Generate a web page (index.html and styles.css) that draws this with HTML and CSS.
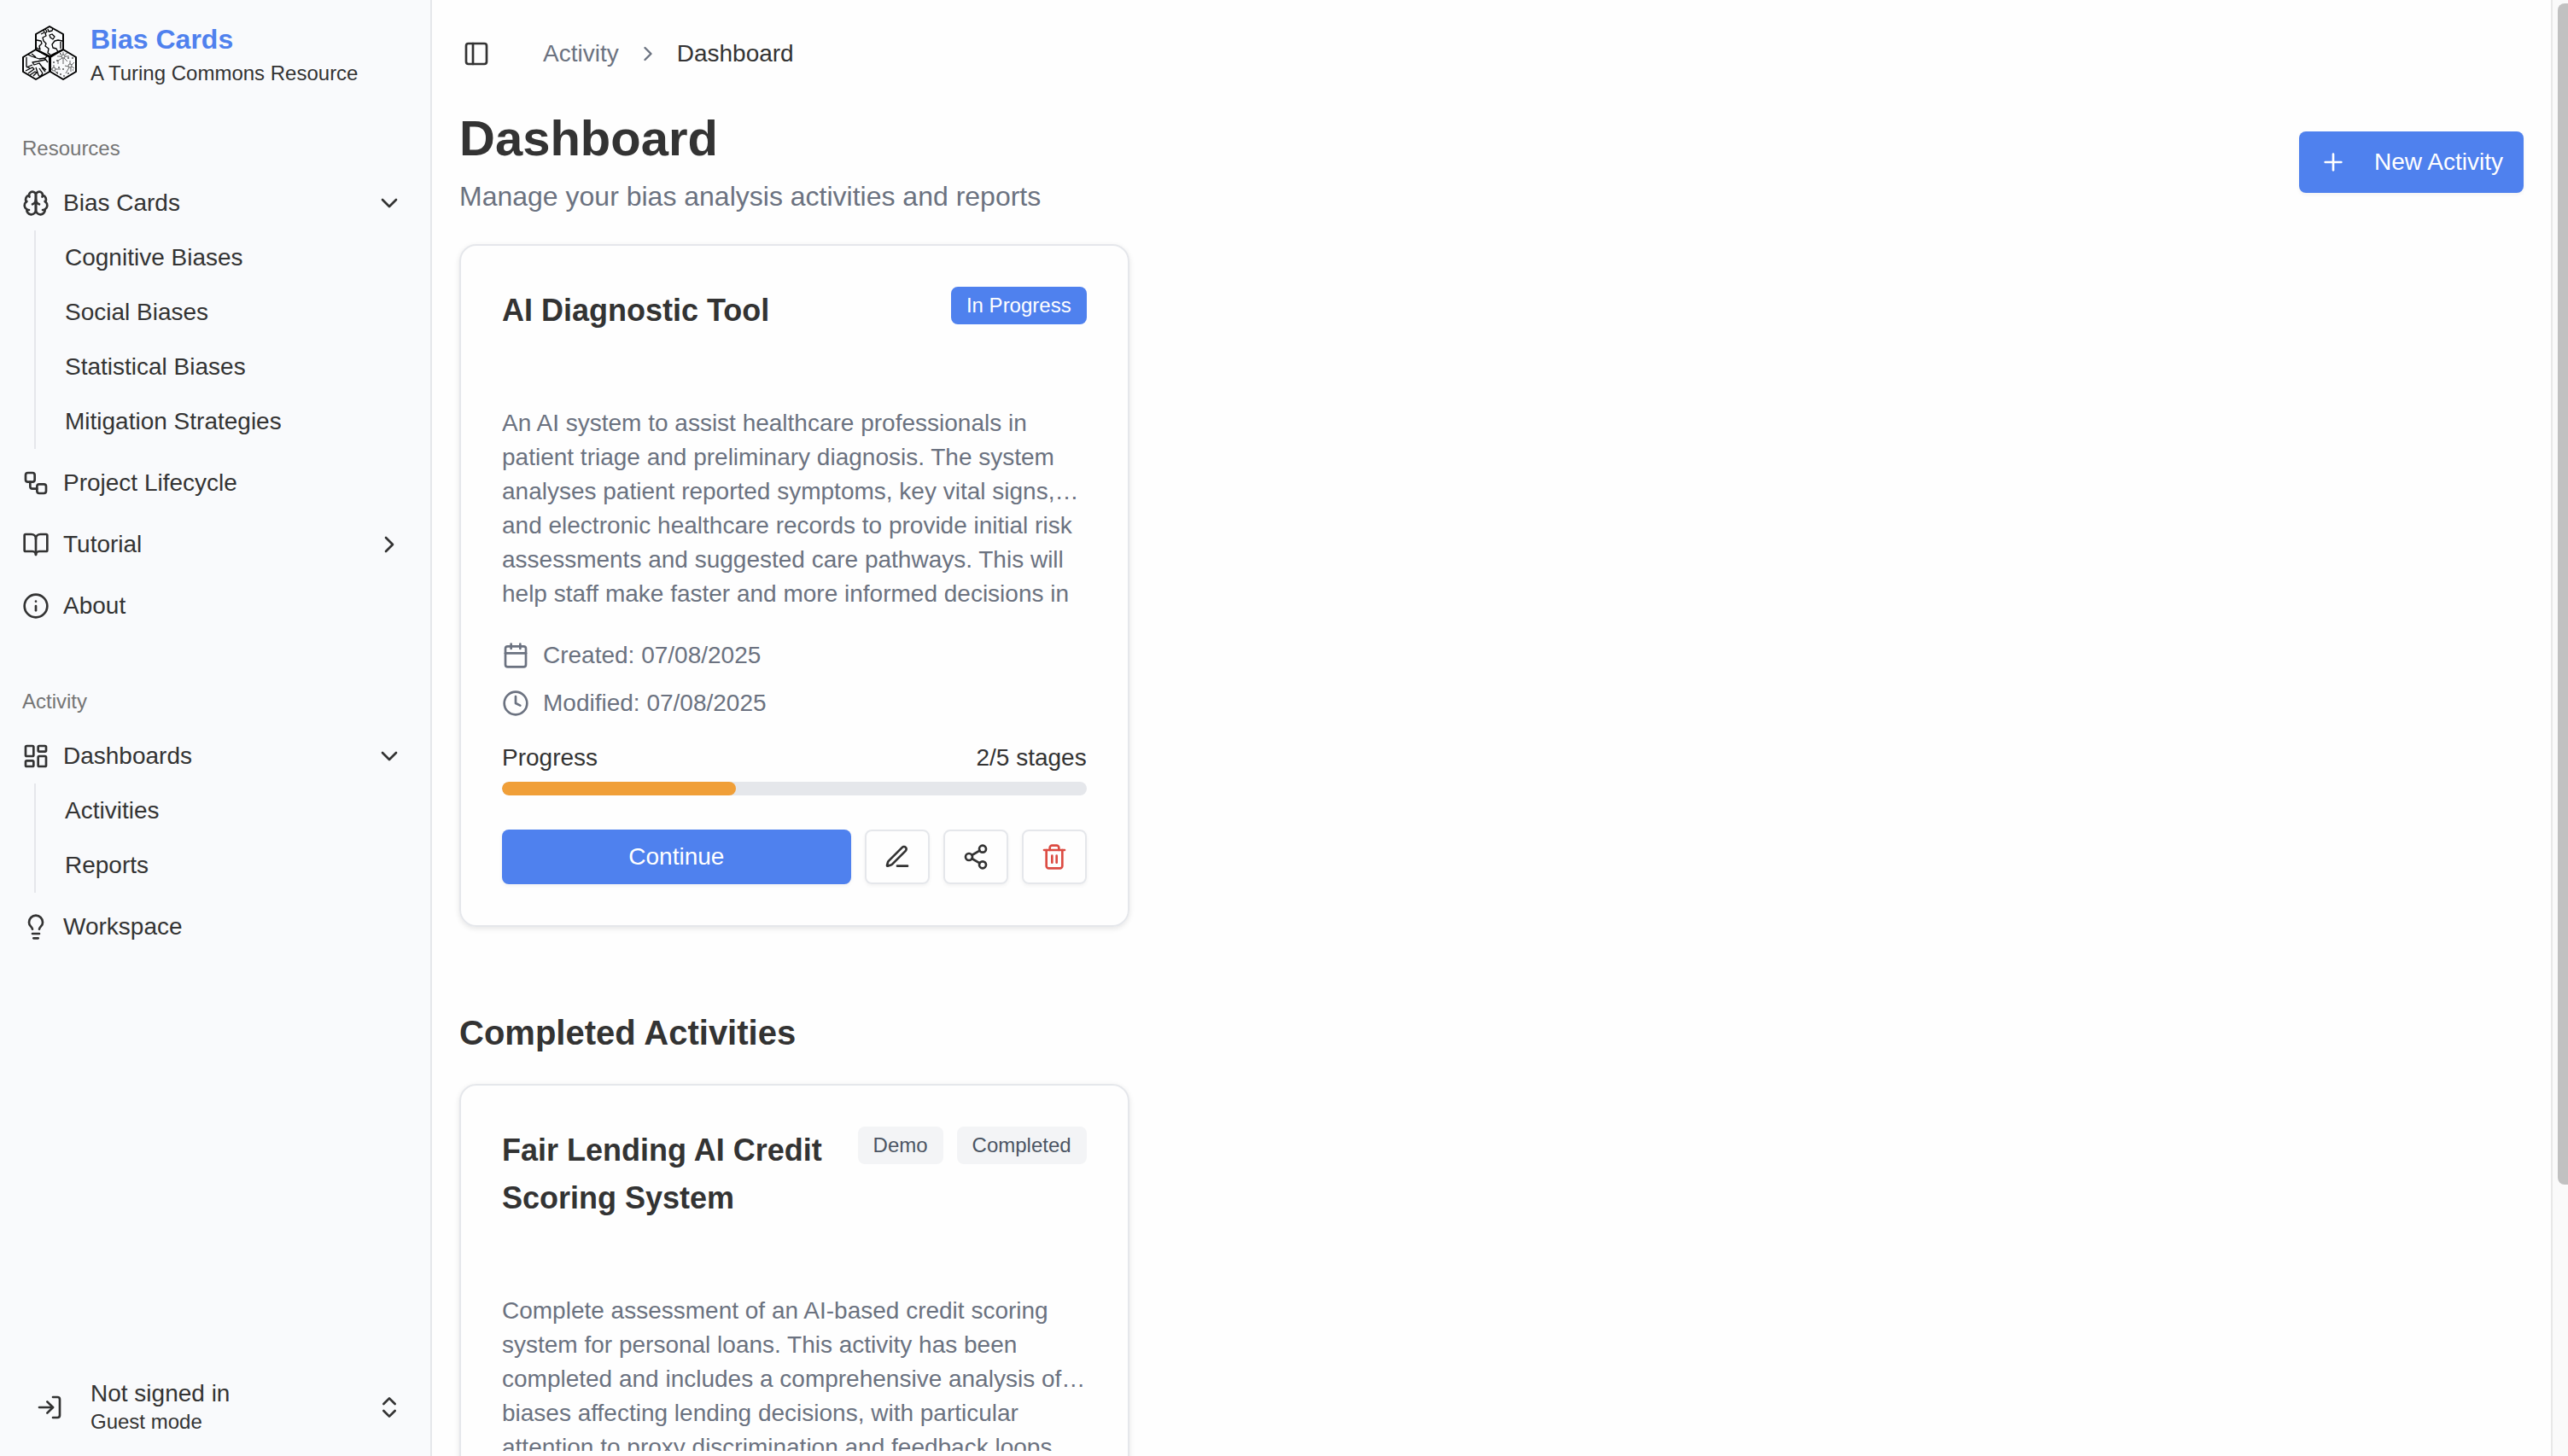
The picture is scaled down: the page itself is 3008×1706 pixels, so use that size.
FILE: index.html
```html
<!DOCTYPE html>
<html lang="en">
<head>
<meta charset="utf-8">
<title>Dashboard - Bias Cards</title>
<link rel="stylesheet" href="styles.css">
</head>
<body>
<div class="app">
  <aside class="sidebar">
    <header class="brand">
      <svg class="brand-logo" viewBox="0 0 64 64" aria-hidden="true">
        <g class="logo-frame">
          <path d="M32 1 48 10V28L32 36 16 28V10Z"/>
          <path d="M16 28 32 37V54L16 63 1 54V37Z"/>
          <path d="M48 28 63 37V54L48 63 33 54V37Z"/>
        </g>
        <g class="logo-art">
          <path d="M27 4 29 7 27 9 28 12 24 14 25 18 28 21 27 24 31 27 30 32 33 34M25 5 26 8 22 10M36 3 35 6 31 7 30 4M32 11 35 10 38 13 36 16 33 14ZM17 17 22 18 23 21 20 24 21 28 17 26M47 18 42 17 38 18 35 22 36 26 40 27 42 31M45 19V27"/>
          <path d="M7 34 11 36 20 39 27 38 29 36M11 33 16 37M5 37V48L9 50M27 40 18 42 12 43 14 46 20 44 23 48 28 52M26 38 30 43M5 49 12 46M4 53 12 49 14 51 7 56M9 58 15 54 17 55 13 59M16 49 19 58M20 50 24 56M23 49 27 54M19 58 21 60 24 56"/>
          <g class="logo-net">
            <circle cx="48" cy="36" r="2"/><circle cx="37" cy="51" r="2"/><circle cx="56" cy="47" r="2"/>
            <path d="M48 34V31M50 36H55M46 36H41M49 38 53 42M47 38 42 41V45M48 38V45M46 34 44 32M50 34 53 32M39 51H45M38 53 42 57M37 49V46M35 51H34M56 45V41M58 46 61 43M54 48 50 47M55 49 51 56M57 49V54M58 48 61 50"/>
            <path class="logo-dots" d="M40 41H42M44 33H45M53 38H55M36 43H38M58 38H60M42 49H44M47 51H49M53 56H55M44 57H46M48 59H50M40 55H42M59 52H60"/>
          </g>
        </g>
      </svg>
      <div class="brand-text">
        <a class="brand-name" href="#">Bias Cards</a>
        <span class="brand-tagline">A Turing Commons Resource</span>
      </div>
    </header>

    <nav class="nav" aria-label="Main">
      <section class="nav-group">
        <h2 class="nav-label">Resources</h2>
        <div class="nav-section">
          <button class="nav-item" type="button" aria-expanded="true">
            <svg class="icon" viewBox="0 0 24 24"><path d="M12 5a3 3 0 1 0-5.997.125 4 4 0 0 0-2.526 5.77 4 4 0 0 0 .556 6.588A4 4 0 1 0 12 18Z"/><path d="M12 5a3 3 0 1 1 5.997.125 4 4 0 0 1 2.526 5.77 4 4 0 0 1-.556 6.588A4 4 0 1 1 12 18Z"/><path d="M15 13a4.500 4.500 0 0 1-3-4 4.500 4.500 0 0 1-3 4"/><path d="M17.599 6.500a3 3 0 0 0 .399-1.375"/><path d="M6.003 5.125A3 3 0 0 0 6.401 6.500"/><path d="M3.477 10.896a4 4 0 0 1 .585-.396"/><path d="M19.938 10.500a4 4 0 0 1 .585.396"/><path d="M6 18a4 4 0 0 1-1.967-.516"/><path d="M19.967 17.484A4 4 0 0 1 18 18"/></svg>
            <span class="nav-text">Bias Cards</span>
            <svg class="icon" viewBox="0 0 24 24"><path d="m6 9 6 6 6-6"/></svg>
          </button>
          <div class="nav-sub">
            <a class="nav-subitem" href="#">Cognitive Biases</a>
            <a class="nav-subitem" href="#">Social Biases</a>
            <a class="nav-subitem" href="#">Statistical Biases</a>
            <a class="nav-subitem" href="#">Mitigation Strategies</a>
          </div>
        </div>
        <a class="nav-item" href="#">
          <svg class="icon" viewBox="0 0 24 24"><rect width="8" height="8" x="3" y="3" rx="2"/><path d="M7 11v4a2 2 0 0 0 2 2h4"/><rect width="8" height="8" x="13" y="13" rx="2"/></svg>
          <span class="nav-text">Project Lifecycle</span>
        </a>
        <button class="nav-item" type="button" aria-expanded="false">
          <svg class="icon" viewBox="0 0 24 24"><path d="M12 7v14"/><path d="M3 18a1 1 0 0 1-1-1V4a1 1 0 0 1 1-1h5a4 4 0 0 1 4 4 4 4 0 0 1 4-4h5a1 1 0 0 1 1 1v13a1 1 0 0 1-1 1h-6a3 3 0 0 0-3 3 3 3 0 0 0-3-3z"/></svg>
          <span class="nav-text">Tutorial</span>
          <svg class="icon" viewBox="0 0 24 24"><path d="m9 18 6-6-6-6"/></svg>
        </button>
        <a class="nav-item" href="#">
          <svg class="icon" viewBox="0 0 24 24"><circle cx="12" cy="12" r="10"/><path d="M12 16v-4"/><path d="M12 8h.01"/></svg>
          <span class="nav-text">About</span>
        </a>
      </section>

      <section class="nav-group">
        <h2 class="nav-label">Activity</h2>
        <div class="nav-section">
          <button class="nav-item" type="button" aria-expanded="true">
            <svg class="icon" viewBox="0 0 24 24"><rect width="7" height="9" x="3" y="3" rx="1"/><rect width="7" height="5" x="14" y="3" rx="1"/><rect width="7" height="9" x="14" y="12" rx="1"/><rect width="7" height="5" x="3" y="16" rx="1"/></svg>
            <span class="nav-text">Dashboards</span>
            <svg class="icon" viewBox="0 0 24 24"><path d="m6 9 6 6 6-6"/></svg>
          </button>
          <div class="nav-sub">
            <a class="nav-subitem" href="#">Activities</a>
            <a class="nav-subitem" href="#">Reports</a>
          </div>
        </div>
        <a class="nav-item" href="#">
          <svg class="icon" viewBox="0 0 24 24"><path d="M15 14c.2-1 .7-1.700 1.500-2.500 1-.9 1.500-2.200 1.500-3.500A6 6 0 0 0 6 8c0 1 .2 2.200 1.500 3.500.7.7 1.300 1.500 1.500 2.500"/><path d="M9 18h6"/><path d="M10 22h4"/></svg>
          <span class="nav-text">Workspace</span>
        </a>
      </section>
    </nav>

    <button class="account" type="button">
      <span class="account-avatar"><svg class="icon" viewBox="0 0 24 24"><path d="M15 3h4a2 2 0 0 1 2 2v14a2 2 0 0 1-2 2h-4"/><path d="m10 17 5-5-5-5"/><path d="M15 12H3"/></svg></span>
      <span class="account-text">
        <span class="account-name">Not signed in</span>
        <span class="account-mode">Guest mode</span>
      </span>
      <svg class="icon" viewBox="0 0 24 24"><path d="m7 15 5 5 5-5"/><path d="m7 9 5-5 5 5"/></svg>
    </button>
  </aside>

  <main class="main">
    <div class="topbar">
      <button class="icon-button" type="button" aria-label="Toggle sidebar">
        <svg class="icon" viewBox="0 0 24 24"><rect width="18" height="18" x="3" y="3" rx="2"/><path d="M9 3v18"/></svg>
      </button>
      <nav class="breadcrumb" aria-label="Breadcrumb">
        <a class="breadcrumb-link" href="#">Activity</a>
        <svg class="icon icon-small" viewBox="0 0 24 24"><path d="m9 18 6-6-6-6"/></svg>
        <span class="breadcrumb-current" aria-current="page">Dashboard</span>
      </nav>
    </div>

    <div class="page">
      <header class="page-header">
        <div class="page-heading">
          <h1 class="page-title">Dashboard</h1>
          <p class="page-subtitle">Manage your bias analysis activities and reports</p>
        </div>
        <button class="button button-new" type="button">
          <svg class="icon" viewBox="0 0 24 24"><path d="M5 12h14"/><path d="M12 5v14"/></svg>
          New Activity
        </button>
      </header>

      <div class="card-grid">
        <article class="card">
          <div class="card-header">
            <h3 class="card-title">AI Diagnostic Tool</h3>
            <div class="badges"><span class="badge badge-primary">In Progress</span></div>
          </div>
          <p class="card-description">An AI system to assist healthcare professionals in patient triage and preliminary diagnosis. The system analyses patient reported symptoms, key vital signs, and electronic healthcare records to provide initial risk assessments and suggested care pathways. This will help staff make faster and more informed decisions in</p>
          <div class="card-dates">
            <div class="card-date"><svg class="icon" viewBox="0 0 24 24"><path d="M8 2v4"/><path d="M16 2v4"/><rect width="18" height="18" x="3" y="4" rx="2"/><path d="M3 10h18"/></svg>Created: 07/08/2025</div>
            <div class="card-date"><svg class="icon" viewBox="0 0 24 24"><circle cx="12" cy="12" r="10"/><path d="M12 6v6l4 2"/></svg>Modified: 07/08/2025</div>
          </div>
          <div class="progress">
            <div class="progress-label"><span>Progress</span><span>2/5 stages</span></div>
            <div class="progress-track"><div class="progress-fill" style="width: 40%"></div></div>
          </div>
          <div class="card-actions">
            <button class="button button-continue" type="button">Continue</button>
            <button class="button button-outline" type="button" aria-label="Edit"><svg class="icon" viewBox="0 0 24 24"><path d="M12 20h9"/><path d="M16.376 3.622a1 1 0 0 1 3.002 3.002L7.368 18.635a2 2 0 0 1-.855.506l-2.872.838a.5.5 0 0 1-.62-.62l.838-2.872a2 2 0 0 1 .506-.854z"/></svg></button>
            <button class="button button-outline" type="button" aria-label="Share"><svg class="icon" viewBox="0 0 24 24"><circle cx="18" cy="5" r="3"/><circle cx="6" cy="12" r="3"/><circle cx="18" cy="19" r="3"/><path d="m8.590 13.510 6.830 3.980"/><path d="m15.410 6.510-6.820 3.980"/></svg></button>
            <button class="button button-outline button-danger" type="button" aria-label="Delete"><svg class="icon" viewBox="0 0 24 24"><path d="M3 6h18"/><path d="M19 6v14c0 1-1 2-2 2H7c-1 0-2-1-2-2V6"/><path d="M8 6V4c0-1 1-2 2-2h4c1 0 2 1 2 2v2"/><path d="M10 11v6"/><path d="M14 11v6"/></svg></button>
          </div>
        </article>
      </div>

      <section class="completed">
        <h2 class="section-title">Completed Activities</h2>
        <div class="card-grid">
          <article class="card">
            <div class="card-header">
              <h3 class="card-title">Fair Lending AI Credit Scoring System</h3>
              <div class="badges"><span class="badge">Demo</span><span class="badge">Completed</span></div>
            </div>
            <p class="card-description">Complete assessment of an AI-based credit scoring system for personal loans. This activity has been completed and includes a comprehensive analysis of biases affecting lending decisions, with particular attention to proxy discrimination and feedback loops.</p>
            <div class="card-dates">
              <div class="card-date"><svg class="icon" viewBox="0 0 24 24"><path d="M8 2v4"/><path d="M16 2v4"/><rect width="18" height="18" x="3" y="4" rx="2"/><path d="M3 10h18"/></svg>Created: 07/08/2025</div>
              <div class="card-date"><svg class="icon" viewBox="0 0 24 24"><circle cx="12" cy="12" r="10"/><path d="M12 6v6l4 2"/></svg>Modified: 07/08/2025</div>
            </div>
            <div class="progress">
              <div class="progress-label"><span>Progress</span><span>5/5 stages</span></div>
              <div class="progress-track"><div class="progress-fill" style="width: 100%"></div></div>
            </div>
            <div class="card-actions">
              <button class="button button-continue" type="button">View Report</button>
            </div>
          </article>
        </div>
      </section>
    </div>
  </main>

  <div class="scroll-rail" aria-hidden="true"><div class="scroll-thumb"></div></div>
</div>
</body>
</html>
```
FILE: styles.css
```css
:root {
  --text: #333333;
  --muted: #6b7280;
  --border: #e5e7eb;
  --primary: #4f81ee;
  --surface: #fefefe;
}

* {
  box-sizing: border-box;
}

body,
h1,
h2,
h3,
p {
  margin: 0;
}

body {
  background: var(--surface);
  color: var(--text);
  font-family: "Liberation Sans", Arial, sans-serif;
  font-size: 28px;
  line-height: 40px;
}

a {
  color: inherit;
  text-decoration: none;
}

button {
  background: none;
  border: 0;
  color: inherit;
  font: inherit;
  padding: 0;
}

.icon {
  fill: none;
  flex: none;
  height: 32px;
  stroke: currentColor;
  stroke-linecap: round;
  stroke-linejoin: round;
  stroke-width: 2;
  width: 32px;
}

.icon-small {
  height: 28px;
  width: 28px;
}

.app {
  display: flex;
  height: 100vh;
  overflow: hidden;
}

/* Sidebar */

.sidebar {
  background: #f9fafc;
  border-right: 2px solid var(--border);
  display: flex;
  flex: none;
  flex-direction: column;
  width: 506px;
}

.brand {
  align-items: center;
  display: flex;
  gap: 16px;
  padding: 22px 26px 0;
}

.brand-logo {
  flex: none;
  height: 64px;
  width: 64px;
}

.logo-frame,
.logo-art {
  fill: none;
  stroke: #000000;
  stroke-linejoin: round;
}

.logo-frame {
  stroke-width: 2;
}

.logo-art {
  stroke-width: 1.3;
}

.logo-net {
  stroke-width: 0.6;
}

.logo-dots {
  stroke-width: 1.2;
}

.brand-text,
.account-text {
  display: flex;
  flex-direction: column;
}

.brand-name {
  color: var(--primary);
  font-size: 32px;
  font-weight: 700;
  line-height: 48px;
}

.brand-tagline,
.account-mode {
  font-size: 24px;
  line-height: 32px;
}

.nav {
  display: flex;
  flex: 1;
  flex-direction: column;
  gap: 48px;
  padding: 40px 32px 0 26px;
}

.nav-group {
  display: flex;
  flex-direction: column;
  gap: 8px;
}

.nav-label {
  color: #757575;
  font-size: 24px;
  font-weight: 400;
  line-height: 64px;
  margin-bottom: -8px;
}

.nav-item {
  align-items: center;
  display: flex;
  gap: 16px;
  height: 64px;
  text-align: left;
  width: 100%;
}

.nav-text {
  flex: 1;
}

.nav-sub {
  border-left: 2px solid var(--border);
  display: flex;
  flex-direction: column;
  margin-left: 14px;
  padding-left: 34px;
}

.nav-subitem {
  line-height: 64px;
}

.account {
  align-items: center;
  display: flex;
  gap: 16px;
  padding: 0 32px 24px 26px;
  text-align: left;
}

.account-avatar {
  display: flex;
  justify-content: center;
  width: 64px;
}

.account-text {
  flex: 1;
}

.account-name {
  line-height: 35px;
}

/* Main column */

.main {
  flex: 1;
  min-width: 0;
  overflow: hidden;
}

.topbar {
  align-items: center;
  display: flex;
  gap: 62px;
  height: 126px;
  padding: 0 32px 0 36px;
}

.icon-button {
  display: flex;
}

.breadcrumb {
  align-items: center;
  color: var(--muted);
  display: flex;
  gap: 20px;
}

.breadcrumb-current {
  color: var(--text);
}

.page {
  padding: 0 32px 32px;
}

.page-header {
  align-items: center;
  display: flex;
  justify-content: space-between;
  margin-bottom: 32px;
}

.page-heading {
  display: flex;
  flex-direction: column;
  gap: 8px;
}

.page-title {
  font-size: 58px;
  font-weight: 700;
  line-height: 72px;
}

.page-subtitle {
  color: var(--muted);
  font-size: 32px;
  line-height: 48px;
}

.button {
  align-items: center;
  border-radius: 8px;
  box-shadow: 0 2px 4px rgba(0, 0, 0, 0.05);
  display: flex;
  height: 64px;
  justify-content: center;
}

.button-new,
.button-continue {
  background: var(--primary);
  color: #ffffff;
}

.button-new {
  gap: 32px;
  height: 72px;
  padding: 0 24px;
}

.button-continue {
  flex: 1;
}

.button-outline {
  border: 2px solid var(--border);
  padding: 0 20px;
}

.button-danger {
  color: #dc4c43;
}

.card-grid {
  display: grid;
  gap: 32px;
  grid-template-columns: repeat(3, minmax(0, 1fr));
}

.card {
  border: 2px solid var(--border);
  border-radius: 20px;
  box-shadow: 0 2px 6px rgba(0, 0, 0, 0.1);
  display: flex;
  flex-direction: column;
  height: 800px;
  padding: 48px;
}

.card-header {
  align-items: flex-start;
  display: flex;
  gap: 16px;
  justify-content: space-between;
  margin-bottom: 84px;
}

.card-title {
  font-size: 36px;
  font-weight: 700;
  line-height: 56px;
}

.badges {
  display: flex;
  flex: none;
  gap: 16px;
}

.badge {
  background: #f3f4f6;
  border-radius: 8px;
  color: #4b5563;
  font-size: 24px;
  line-height: 32px;
  padding: 6px 18px;
}

.badge-primary {
  background: var(--primary);
  color: #ffffff;
}

/* The clamp marks the third line; the flexible height still shows the lines after it. */
.card-description {
  -webkit-box-orient: vertical;
  -webkit-line-clamp: 3;
  color: var(--muted);
  display: -webkit-box;
  flex: 1;
  min-height: 0;
  overflow: hidden;
}

.card-dates {
  color: var(--muted);
  display: flex;
  flex-direction: column;
  gap: 16px;
  margin: 32px 0 24px;
}

.card-date {
  align-items: center;
  display: flex;
  gap: 16px;
}

.progress {
  display: flex;
  flex-direction: column;
  gap: 8px;
  margin-bottom: 40px;
}

.progress-label {
  display: flex;
  justify-content: space-between;
}

.progress-track {
  background: var(--border);
  border-radius: 8px;
  height: 16px;
  overflow: hidden;
}

.progress-fill {
  background: #f09f38;
  border-radius: 8px;
  height: 100%;
}

.card-actions {
  display: flex;
  gap: 16px;
}

.completed {
  margin-top: 96px;
}

.section-title {
  font-size: 40px;
  font-weight: 700;
  line-height: 56px;
  margin-bottom: 32px;
}

/* Scroll rail */

.scroll-rail {
  background: #fafafa;
  border-left: 2px solid #e8e8e8;
  flex: none;
  padding: 4px 0 4px 6px;
  width: 20px;
}

.scroll-thumb {
  background: #c1c1c1;
  border-radius: 8px 0 0 8px;
  height: 81.5%;
}
```
